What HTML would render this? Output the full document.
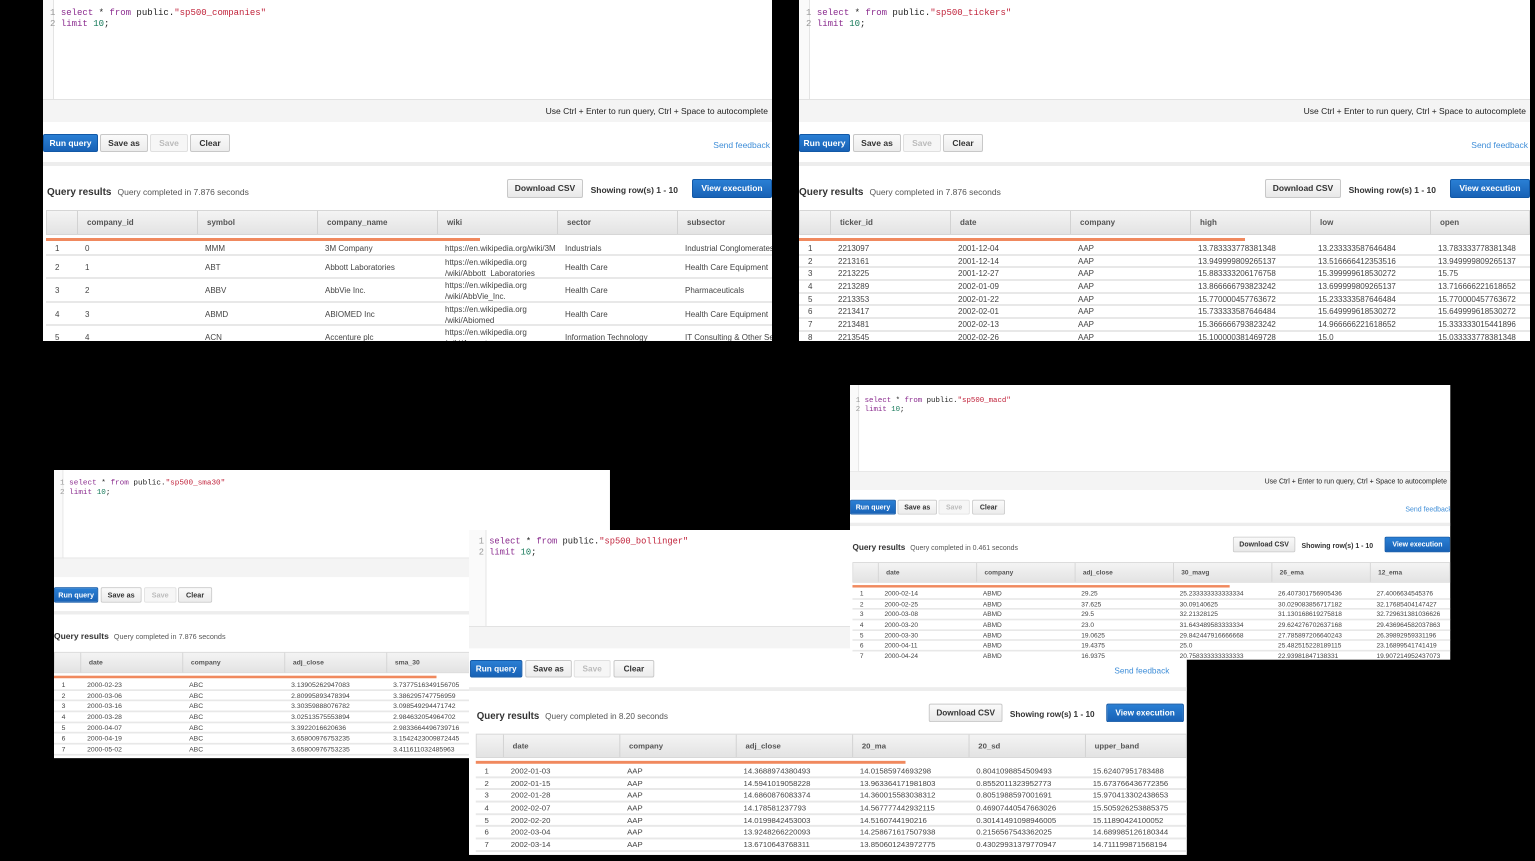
<!DOCTYPE html>
<html><head><meta charset="utf-8"><style>
*{box-sizing:border-box;margin:0;padding:0}
body{width:1535px;height:861px;background:#000;position:relative;overflow:hidden;font-family:"Liberation Sans",sans-serif;color:#333}
.p{position:absolute;background:#fff;overflow:hidden;transform-origin:0 0}
.ed{position:absolute;left:0;right:0;top:0;background:#fff;border-bottom:1px solid #e2e2e2}
.gut{position:absolute;left:0;top:0;bottom:0;width:11px;border-right:1px solid #e4e4e4;background:#fafafa}
.code{position:absolute;left:7px;top:8px;font:9px/11px "Liberation Mono",monospace;color:#222;white-space:pre}
.ln{color:#999}.kw{color:#8a2b8e}.st{color:#c0223a}.nm{color:#167a5a}
.lo{position:absolute;left:0;right:0}
.hint{position:absolute;left:0;right:0;top:0;height:22px;background:#f4f4f4;text-align:right;padding-right:4px;font-size:8.5px;line-height:22px;color:#222}
.btn{position:absolute;top:34px;height:18px;font-size:8.5px;font-weight:bold;line-height:16px;text-align:center;border:1px solid #c8c8c8;background:linear-gradient(#fafafa,#ececec);border-radius:2px;color:#333}
.run{background:linear-gradient(#2a7fd4,#1862b6);border-color:#1258a6;color:#fff}
.dis{color:#bbb;background:#f6f6f6;border-color:#e0e0e0}
.fb{position:absolute;top:40px;right:2px;font-size:8.5px;color:#3f8ed8}
.sep{position:absolute;left:0;right:0;top:62px;height:4px;background:#ededed}
.ttl{position:absolute;left:4px;top:87px;font-size:10px;font-weight:bold;color:#333;white-space:nowrap}
.ttl span{font-weight:normal;font-size:8.5px;color:#555;margin-left:6px}
.dl{position:absolute;top:79px;right:189px;width:76px;height:19px;font-size:8.5px;font-weight:bold;line-height:17px;text-align:center;border:1px solid #c8c8c8;background:linear-gradient(#fafafa,#e8e8e8);border-radius:2px}
.sh{position:absolute;top:85px;right:94px;font-size:8.5px;font-weight:bold;color:#333}
.ve{position:absolute;top:79px;right:0;width:80px;height:19px;font-size:8.5px;font-weight:bold;line-height:17px;text-align:center;color:#fff;background:linear-gradient(#2a7fd4,#1862b6);border:1px solid #1258a6;border-radius:2px}
.tb{position:absolute;top:110px;left:3px;right:0}
.hd{height:25px;background:linear-gradient(#f4f4f4,#e3e3e3);border:1px solid #d6d6d6;display:flex;font-size:8px;font-weight:bold;color:#555;line-height:24px;white-space:nowrap}
.hd span,.r span{display:block;flex:none;width:120px;padding-left:9px;border-left:1px solid #d2d2d2;overflow:hidden}
.hd span:first-child,.r span:first-child{width:30px;border-left:none}
.r span{border-left:none}
.ob{height:3px;background:#f0895e;width:434px;margin-top:3px;margin-bottom:2px}
.r{display:flex;font-size:8px;color:#444;height:12.7px;line-height:11px;border-bottom:2px solid #e8e8e8;white-space:nowrap}
.r.t{height:23.5px;line-height:10.5px;padding-top:0}
.r.t span{padding-top:1px}
.r.o span{line-height:21px}
</style></head><body>

<!-- TOP LEFT -->
<div class="p" style="left:43px;top:0;width:729px;height:341px">
 <div class="ed" style="height:100px"><div class="gut"></div><div class="code"><span class="ln">1</span> <span class="kw">select</span> * <span class="kw">from</span> public.<span class="st">"sp500_companies"</span>
<span class="ln">2</span> <span class="kw">limit</span> <span class="nm">10</span>;</div></div>
 <div class="lo" style="top:100px">
  <div class="hint">Use Ctrl + Enter to run query, Ctrl + Space to autocomplete</div>
  <div class="btn run" style="left:0;width:55px">Run query</div>
  <div class="btn" style="left:57px;width:48px">Save as</div>
  <div class="btn dis" style="left:107px;width:38px">Save</div>
  <div class="btn" style="left:147px;width:40px">Clear</div>
  <div class="fb">Send feedback</div>
  <div class="sep"></div>
  <div class="ttl">Query results<span>Query completed in 7.876 seconds</span></div>
  <div class="dl">Download CSV</div><div class="sh">Showing row(s) 1 - 10</div><div class="ve">View execution</div>
  <div class="tb">
   <div class="hd"><span></span><span>company_id</span><span>symbol</span><span>company_name</span><span>wiki</span><span>sector</span><span>subsector</span></div>
   <div class="ob"></div>
   <div class="r"><span>1</span><span>0</span><span>MMM</span><span>3M Company</span><span>https://en.wikipedia.org/wiki/3M</span><span>Industrials</span><span>Industrial Conglomerates</span></div>
   <div class="r t o"><span>2</span><span>1</span><span>ABT</span><span>Abbott Laboratories</span><span style="line-height:11px">https://en.wikipedia.org<br>/wiki/Abbott_Laboratories</span><span>Health Care</span><span>Health Care Equipment</span></div>
   <div class="r t o"><span>3</span><span>2</span><span>ABBV</span><span>AbbVie Inc.</span><span style="line-height:11px">https://en.wikipedia.org<br>/wiki/AbbVie_Inc.</span><span>Health Care</span><span>Pharmaceuticals</span></div>
   <div class="r t o"><span>4</span><span>3</span><span>ABMD</span><span>ABIOMED Inc</span><span style="line-height:11px">https://en.wikipedia.org<br>/wiki/Abiomed</span><span>Health Care</span><span>Health Care Equipment</span></div>
   <div class="r t o"><span>5</span><span>4</span><span>ACN</span><span>Accenture plc</span><span style="line-height:11px">https://en.wikipedia.org<br>/wiki/Accenture</span><span>Information Technology</span><span>IT Consulting &amp; Other Services</span></div>
  </div>
 </div>
</div>

<!-- TOP RIGHT -->
<div class="p" style="left:799px;top:0;width:731px;height:341px">
 <div class="ed" style="height:100px"><div class="gut"></div><div class="code"><span class="ln">1</span> <span class="kw">select</span> * <span class="kw">from</span> public.<span class="st">"sp500_tickers"</span>
<span class="ln">2</span> <span class="kw">limit</span> <span class="nm">10</span>;</div></div>
 <div class="lo" style="top:100px">
  <div class="hint">Use Ctrl + Enter to run query, Ctrl + Space to autocomplete</div>
  <div class="btn run" style="left:0;width:51px">Run query</div>
  <div class="btn" style="left:54px;width:48px">Save as</div>
  <div class="btn dis" style="left:104px;width:38px">Save</div>
  <div class="btn" style="left:144px;width:40px">Clear</div>
  <div class="fb">Send feedback</div>
  <div class="sep"></div>
  <div class="ttl" style="left:0">Query results<span>Query completed in 7.876 seconds</span></div>
  <div class="dl">Download CSV</div><div class="sh">Showing row(s) 1 - 10</div><div class="ve">View execution</div>
  <div class="tb" style="left:0">
   <div class="hd"><span></span><span>ticker_id</span><span>date</span><span>company</span><span>high</span><span>low</span><span>open</span></div>
   <div class="ob" style="width:446px"></div>
   <div class="r"><span>1</span><span>2213097</span><span>2001-12-04</span><span>AAP</span><span>13.783333778381348</span><span>13.233333587646484</span><span>13.783333778381348</span></div>
   <div class="r"><span>2</span><span>2213161</span><span>2001-12-14</span><span>AAP</span><span>13.949999809265137</span><span>13.516666412353516</span><span>13.949999809265137</span></div>
   <div class="r"><span>3</span><span>2213225</span><span>2001-12-27</span><span>AAP</span><span>15.883333206176758</span><span>15.399999618530272</span><span>15.75</span></div>
   <div class="r"><span>4</span><span>2213289</span><span>2002-01-09</span><span>AAP</span><span>13.866666793823242</span><span>13.699999809265137</span><span>13.716666221618652</span></div>
   <div class="r"><span>5</span><span>2213353</span><span>2002-01-22</span><span>AAP</span><span>15.770000457763672</span><span>15.233333587646484</span><span>15.770000457763672</span></div>
   <div class="r"><span>6</span><span>2213417</span><span>2002-02-01</span><span>AAP</span><span>15.733333587646484</span><span>15.649999618530272</span><span>15.649999618530272</span></div>
   <div class="r"><span>7</span><span>2213481</span><span>2002-02-13</span><span>AAP</span><span>15.366666793823242</span><span>14.966666221618652</span><span>15.333333015441896</span></div>
   <div class="r"><span>8</span><span>2213545</span><span>2002-02-26</span><span>AAP</span><span>15.100000381469728</span><span>15.0</span><span>15.033333778381348</span></div>
  </div>
 </div>
</div>

<!-- SMA30 -->
<div class="p" style="left:54px;top:470px;width:654px;height:339px;transform:scale(0.85)">
 <div class="ed" style="height:104px"><div class="gut"></div><div class="code" style="top:10px"><span class="ln">1</span> <span class="kw">select</span> * <span class="kw">from</span> public.<span class="st">"sp500_sma30"</span>
<span class="ln">2</span> <span class="kw">limit</span> <span class="nm">10</span>;</div></div>
 <div class="lo" style="top:104px">
  <div class="hint"></div>
  <div class="btn run" style="left:0;width:52px">Run query</div>
  <div class="btn" style="left:55px;width:48px">Save as</div>
  <div class="btn dis" style="left:106px;width:38px">Save</div>
  <div class="btn" style="left:146px;width:40px">Clear</div>
  <div class="sep"></div>
  <div class="ttl" style="left:0">Query results<span>Query completed in 7.876 seconds</span></div>
  <div class="dl" style="right:-50px">Download CSV</div>
  <div class="tb" style="left:0">
   <div class="hd"><span></span><span>date</span><span>company</span><span>adj_close</span><span>sma_30</span><span></span></div>
   <div class="ob" style="width:450px"></div>
   <div class="r"><span>1</span><span>2000-02-23</span><span>ABC</span><span>3.13905262947083</span><span>3.7377516349156705</span></div>
   <div class="r"><span>2</span><span>2000-03-06</span><span>ABC</span><span>2.80995893478394</span><span>3.386295747756959</span></div>
   <div class="r"><span>3</span><span>2000-03-16</span><span>ABC</span><span>3.30359888076782</span><span>3.098549294471742</span></div>
   <div class="r"><span>4</span><span>2000-03-28</span><span>ABC</span><span>3.02513575553894</span><span>2.984632054964702</span></div>
   <div class="r"><span>5</span><span>2000-04-07</span><span>ABC</span><span>3.3922016620636</span><span>2.9833664496739716</span></div>
   <div class="r"><span>6</span><span>2000-04-19</span><span>ABC</span><span>3.65800976753235</span><span>3.1542423009872445</span></div>
   <div class="r"><span>7</span><span>2000-05-02</span><span>ABC</span><span>3.65800976753235</span><span>3.411611032485963</span></div>
  </div>
 </div>
</div>

<!-- BOLLINGER -->
<div class="p" style="left:469px;top:530px;width:740px;height:335px;transform:scale(0.97)">
 <div class="ed" style="height:100px"><div class="gut" style="width:18px"></div><div class="code" style="left:10px;top:7px"><span class="ln">1</span> <span class="kw">select</span> * <span class="kw">from</span> public.<span class="st">"sp500_bollinger"</span>
<span class="ln">2</span> <span class="kw">limit</span> <span class="nm">10</span>;</div></div>
 <div class="lo" style="top:100px">
  <div class="hint"></div>
  <div class="btn run" style="left:1px;width:54px">Run query</div>
  <div class="btn" style="left:58px;width:48px">Save as</div>
  <div class="btn dis" style="left:108px;width:38px">Save</div>
  <div class="btn" style="left:149px;width:42px">Clear</div>
  <div class="fb" style="right:18px">Send feedback</div>
  <div class="sep"></div>
  <div class="ttl" style="left:8px">Query results<span>Query completed in 8.20 seconds</span></div>
  <div class="dl" style="right:190px">Download CSV</div><div class="sh" style="right:95px">Showing row(s) 1 - 10</div><div class="ve" style="right:3px">View execution</div>
  <div class="tb" style="left:7px;right:0">
   <div class="hd"><span style="width:27px"></span><span>date</span><span>company</span><span>adj_close</span><span>20_ma</span><span>20_sd</span><span>upper_band</span></div>
   <div class="ob" style="width:443px"></div>
   <div class="r"><span style="width:27px">1</span><span>2002-01-03</span><span>AAP</span><span>14.3688974380493</span><span>14.01585974693298</span><span>0.8041098854509493</span><span>15.62407951783488</span></div>
   <div class="r"><span style="width:27px">2</span><span>2002-01-15</span><span>AAP</span><span>14.5941019058228</span><span>13.963364171981803</span><span>0.8552011323952773</span><span>15.673766436772356</span></div>
   <div class="r"><span style="width:27px">3</span><span>2002-01-28</span><span>AAP</span><span>14.6860876083374</span><span>14.360015583038312</span><span>0.8051988597001691</span><span>15.970413302438653</span></div>
   <div class="r"><span style="width:27px">4</span><span>2002-02-07</span><span>AAP</span><span>14.178581237793</span><span>14.567777442932115</span><span>0.46907440547663026</span><span>15.505926253885375</span></div>
   <div class="r"><span style="width:27px">5</span><span>2002-02-20</span><span>AAP</span><span>14.0199842453003</span><span>14.5160744190216</span><span>0.30141491098946005</span><span>15.11890424100052</span></div>
   <div class="r"><span style="width:27px">6</span><span>2002-03-04</span><span>AAP</span><span>13.9248266220093</span><span>14.258671617507938</span><span>0.2156567543362025</span><span>14.689985126180344</span></div>
   <div class="r"><span style="width:27px">7</span><span>2002-03-14</span><span>AAP</span><span>13.6710643768311</span><span>13.850601243972775</span><span>0.43029931379770947</span><span>14.711199871568194</span></div>
   <div class="r"><span style="width:27px">8</span><span>2002-03-26</span><span>AAP</span><span>14.0799999237061</span><span>13.8888888888888</span><span>0.41638871019823</span><span>14.5666666666666</span></div>
  </div>
 </div>
</div>

<!-- MACD -->
<div class="p" style="left:850px;top:385px;width:732px;height:335px;transform:scale(0.82)">
 <div class="ed" style="height:106px;top:0"><div class="gut"></div><div class="code" style="top:14px"><span class="ln">1</span> <span class="kw">select</span> * <span class="kw">from</span> public.<span class="st">"sp500_macd"</span>
<span class="ln">2</span> <span class="kw">limit</span> <span class="nm">10</span>;</div></div>
 <div class="lo" style="top:106px">
  <div class="hint">Use Ctrl + Enter to run query, Ctrl + Space to autocomplete</div>
  <div class="btn run" style="left:0;width:56px">Run query</div>
  <div class="btn" style="left:58px;width:48px">Save as</div>
  <div class="btn dis" style="left:108px;width:38px">Save</div>
  <div class="btn" style="left:149px;width:40px">Clear</div>
  <div class="fb" style="right:-2px">Send feedback</div>
  <div class="sep"></div>
  <div class="ttl" style="left:3px">Query results<span>Query completed in 0.461 seconds</span></div>
  <div class="dl">Download CSV</div><div class="sh">Showing row(s) 1 - 10</div><div class="ve">View execution</div>
  <div class="tb" style="left:3px">
   <div class="hd"><span></span><span>date</span><span>company</span><span>adj_close</span><span>30_mavg</span><span>26_ema</span><span>12_ema</span></div>
   <div class="ob" style="width:460px"></div>
   <div class="r"><span>1</span><span>2000-02-14</span><span>ABMD</span><span>29.25</span><span>25.233333333333334</span><span>26.407301756905436</span><span>27.4006634545376</span></div>
   <div class="r"><span>2</span><span>2000-02-25</span><span>ABMD</span><span>37.625</span><span>30.09140625</span><span>30.029083856717182</span><span>32.17685404147427</span></div>
   <div class="r"><span>3</span><span>2000-03-08</span><span>ABMD</span><span>29.5</span><span>32.21328125</span><span>31.130168619275818</span><span>32.729631381036626</span></div>
   <div class="r"><span>4</span><span>2000-03-20</span><span>ABMD</span><span>23.0</span><span>31.643489583333334</span><span>29.624276702637168</span><span>29.436964582037863</span></div>
   <div class="r"><span>5</span><span>2000-03-30</span><span>ABMD</span><span>19.0625</span><span>29.842447916666668</span><span>27.785897206640243</span><span>26.39892959331196</span></div>
   <div class="r"><span>6</span><span>2000-04-11</span><span>ABMD</span><span>19.4375</span><span>25.0</span><span>25.482515228189115</span><span>23.16899541741419</span></div>
   <div class="r"><span>7</span><span>2000-04-24</span><span>ABMD</span><span>16.9375</span><span>20.758333333333333</span><span>22.93981847138331</span><span>19.907214952437073</span></div>
  </div>
 </div>
</div>
</body></html>
